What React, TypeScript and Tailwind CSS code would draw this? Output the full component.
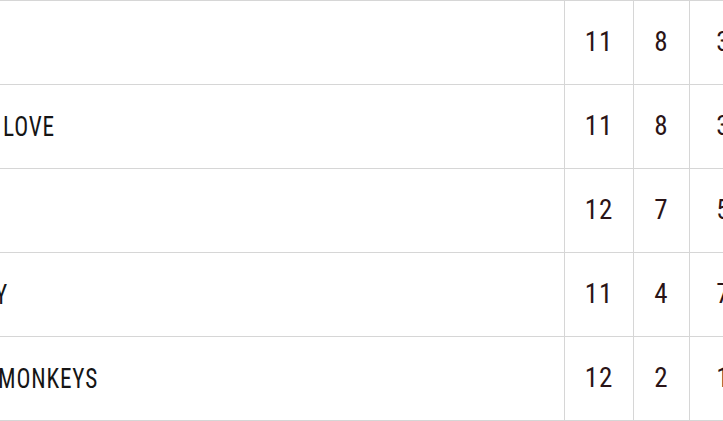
const rows = [
  { name: "", a: "11", b: "8", c: "3", ml: "ml-[3px]" },
  { name: "LOVE", a: "11", b: "8", c: "3", ml: "ml-[3px]" },
  { name: "", a: "12", b: "7", c: "5", ml: "ml-[3px]" },
  { name: "Y", a: "11", b: "4", c: "7", ml: "-ml-[5px]" },
  { name: "MONKEYS", a: "12", b: "2", c: "1", ml: "-ml-[2px]" },
];

export default function App() {
  return (
    <div
      className="w-[723px] h-[421px] overflow-hidden bg-white"
      style={{ fontFamily: "'Roboto Condensed', 'Liberation Sans Narrow', sans-serif" }}
    >
      <div className="w-[790px] border-b border-[#d6d6d6]">
        {rows.map((r, i) => (
          <div key={i} className="flex h-[84px] border-t border-[#d6d6d6]">
            <div className="w-[564px] flex items-center overflow-hidden">
              <span
                className={`text-[28px] leading-none tracking-[1px] text-[#151515] whitespace-nowrap scale-x-[0.83] origin-left ${r.ml}`}
              >
                {r.name}
              </span>
            </div>
            <div className="w-[69px] border-l border-[#d6d6d6] flex items-center justify-center text-[27px] tracking-[1px] text-[#2a1417]">
              {r.a}
            </div>
            <div className="w-[56px] border-l border-[#d6d6d6] flex items-center justify-center text-[27px] tracking-[1px] text-[#2a1417]">
              {r.b}
            </div>
            <div className="w-[68px] border-l border-[#d6d6d6] flex items-center justify-center text-[27px] tracking-[1px] text-[#2a1417]">
              {r.c}
            </div>
          </div>
        ))}
      </div>
    </div>
  );
}
